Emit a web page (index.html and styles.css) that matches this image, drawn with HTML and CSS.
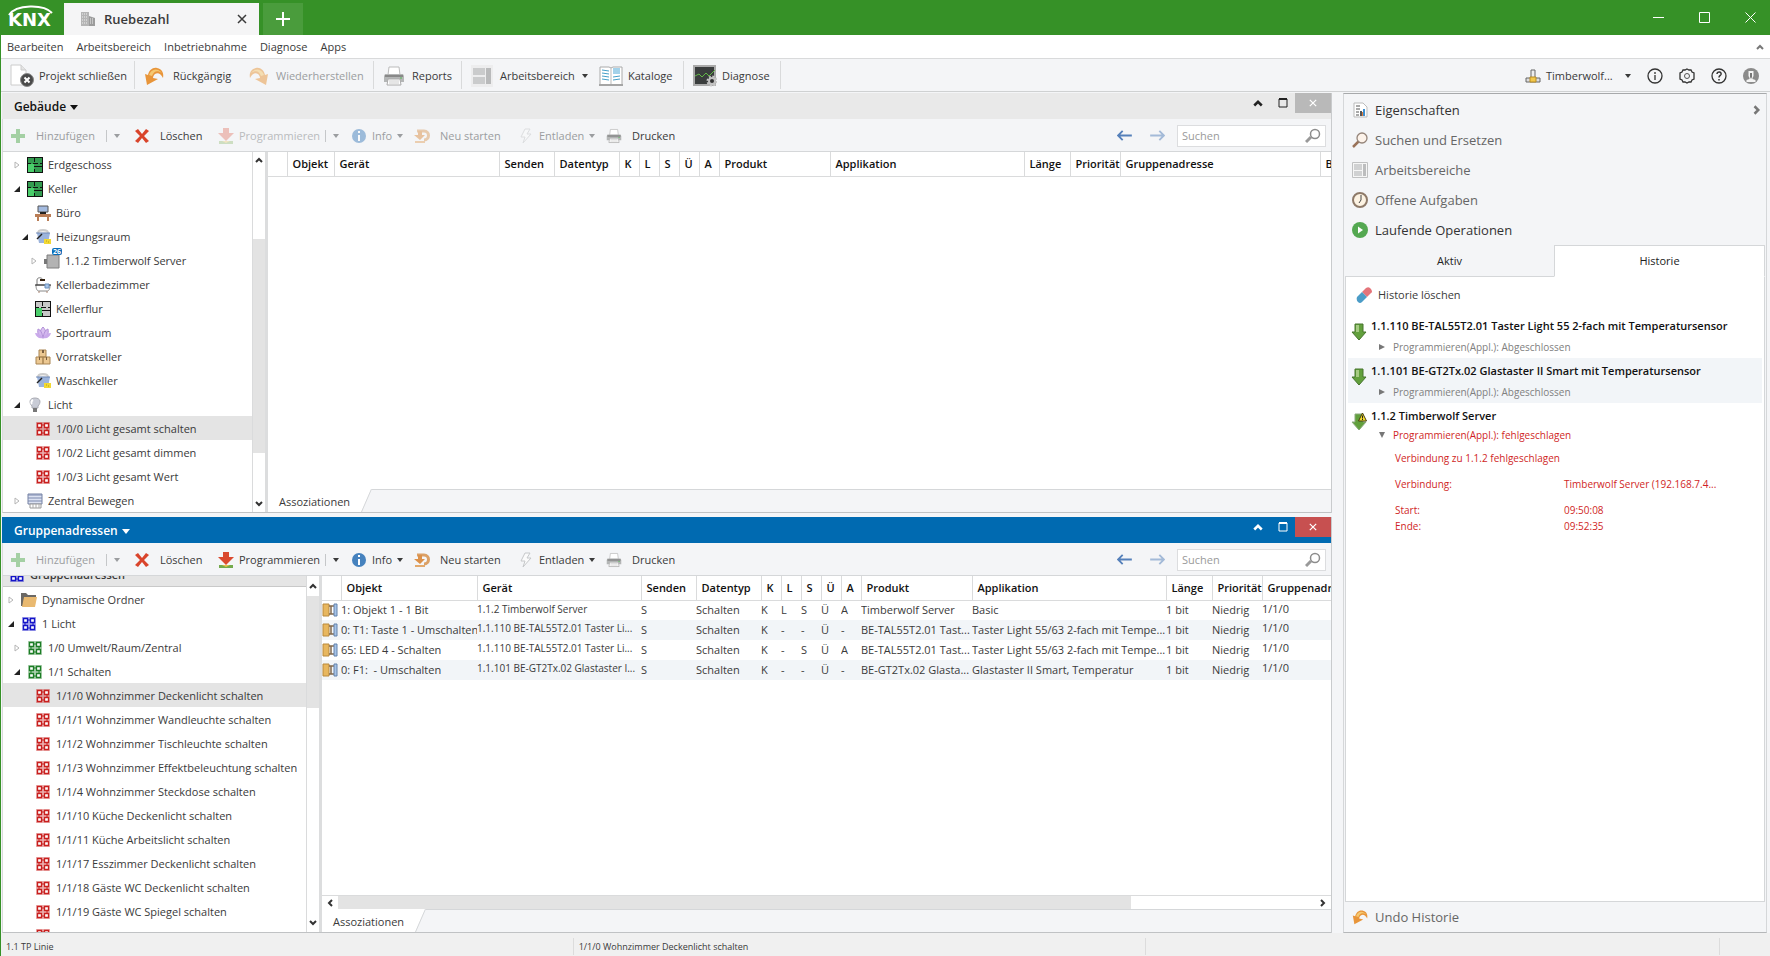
FILE: index.html
```html
<!DOCTYPE html>
<html lang="de">
<head>
  <meta charset="UTF-8">
  <title>Ruebezahl</title>
  <link rel="stylesheet" href="styles.css">
</head>
<body>

  <!-- Icons -->
  <svg class="sprite" xmlns="http://www.w3.org/2000/svg">
    <symbol id="i-building" viewBox="0 0 16 16">
      <path d="M1 1h8v14H1z" fill="#b5b5b5"/><path d="M9 5l6 2v8H9z" fill="#9c9c9c"/>
      <path d="M2 3h6M2 6h6M2 9h6M2 12h6M10 8h4M10 10h4M10 12h4" stroke="#eee" stroke-dasharray="1 1"/>
    </symbol>
    <symbol id="i-close-project" viewBox="0 0 24 24">
      <path d="M1 1h10l5 5v15H1z" fill="#fff" stroke="#ccc"/><path d="M11 1v5h5" fill="#e4e4e4" stroke="#ccc"/>
      <circle cx="17" cy="16" r="6.500" fill="#4a4a4a" stroke="#888"/><path d="M14.500 13.500l5 5M19.500 13.500l-5 5" stroke="#fff" stroke-width="2"/>
    </symbol>
    <symbol id="i-undo" viewBox="0 0 20 18">
      <path d="M1 7l3 1C5 3 9 0 13 1c5 1 7 5 6 10-2-4-5-6-8-4-1 1-2 2-2 4l5 1-11 6z" fill="#e8953a"/>
      <path d="M5 8c2-6 8-8 13-2-5-3-8-2-10 3z" fill="#f5c870"/>
    </symbol>
    <symbol id="i-printer" viewBox="0 0 22 20">
      <path d="M6 1h10l1 8H5z" fill="#fff" stroke="#bbb"/><path d="M2 8h18l1 2v6H1v-6z" fill="#b4b6b6"/>
      <path d="M2 10h18" stroke="#888" stroke-width="2"/><path d="M5 13h12l1 6H4z" fill="#fff" stroke="#aaa"/><path d="M6 15h10M6 17h10" stroke="#ccc"/><path d="M17 12h2" stroke="#5b5"/>
    </symbol>
    <symbol id="i-workspace" viewBox="0 0 22 22">
      <path d="M0 0h22v22H0z" fill="#ededee"/><path d="M2 3h12v7H2zM2 12h12v7H2z" fill="#cacbcc"/><path d="M15 3h5v16h-5z" fill="#b9babb"/>
    </symbol>
    <symbol id="i-areas" viewBox="0 0 16 16">
      <path d="M.5 .5h15v15H.5z" fill="#f6f6f6" stroke="#c0c1c2"/><path d="M2 2h8v6H2zM2 9h8v5H2z" fill="#d0d1d2"/><path d="M11 2h3v12h-3z" fill="#bcbdbe"/>
    </symbol>
    <symbol id="i-catalog" viewBox="0 0 24 22">
      <path d="M1 2h9l2 1 2-1h9v18H1z" fill="#fff" stroke="#aaa"/><path d="M0 20h24" stroke="#a5a5a5" stroke-width="2"/><path d="M12 3v16" stroke="#bbb"/>
      <path d="M3 5l7 1M3 8l7 1M3 11l7 1M3 14l7 1M14 12l7-1M14 15l7-1" stroke="#459fc8"/><path d="M14 3h7v6h-7z" fill="#a3d2ea"/>
    </symbol>
    <symbol id="i-diagnose" viewBox="0 0 24 22">
      <path d="M1 1h21v19H1z" fill="#3a3d3d" stroke="#aaa" stroke-width="2"/><path d="M2 11l4-2 3 3 4-4 3 3 6-6" fill="none" stroke="#62b748"/>
      <circle cx="19" cy="16" r="4.500" fill="none" stroke="#c8c8c8" stroke-width="2" stroke-dasharray="2 1.500"/><circle cx="19" cy="16" r="3" fill="#333" stroke="#c2c2c2" stroke-width="2"/>
    </symbol>
    <symbol id="i-net" viewBox="0 0 16 16">
      <path d="M6 2h4v8H6z" fill="#eee" stroke="#666"/><path d="M1 10h14v4H1z" fill="#ddd" stroke="#666"/><path d="M5 9h6v5H5z" fill="#f2c84b" stroke="#b78b24"/>
    </symbol>
    <symbol id="i-info-line" viewBox="0 0 16 16"><circle cx="8" cy="8" r="7" fill="none" stroke="#333" stroke-width="1.300"/><path d="M8 7v5M8 4v2" stroke="#333" stroke-width="1.300"/></symbol>
    <symbol id="i-gear" viewBox="0 0 16 16">
      <path d="M8 1l2 1 2 0 1 2 2 1 0 3 0 3-2 1-1 2-2 0-2 1-2-1-2 0-1-2-2-1 0-3 0-3 2-1 1-2 2 0z" fill="none" stroke="#333" stroke-width="1.300"/>
      <circle cx="8" cy="8" r="2.500" fill="none" stroke="#555"/>
    </symbol>
    <symbol id="i-help" viewBox="0 0 16 16"><circle cx="8" cy="8" r="7" fill="none" stroke="#333" stroke-width="1.300"/><path d="M6 6c0-3 5-2.500 4 .5C9.500 7.500 8 7.500 8 9.500M8 11v1.500" fill="none" stroke="#333" stroke-width="1.500"/></symbol>
    <symbol id="i-user" viewBox="0 0 16 16">
      <circle cx="8" cy="8" r="8" fill="#8b8b8b"/><path d="M5.500 3h5v5L9.500 10v1l3 1v2h-9v-2l3-1v-1L5.500 8z" fill="#f4f4f4"/><path d="M7 5h2v4l-1 2-1-2z" fill="#777"/>
    </symbol>
    <symbol id="i-plus" viewBox="0 0 16 16"><path d="M6 1h4v5h5v4h-5v5H6v-5H1V6h5z" fill="#56ad54"/></symbol>
    <symbol id="i-delete" viewBox="0 0 16 16"><path d="M1 3l3-2 4 5 4-5 3 2-5 5 5 5-3 2-4-5-4 5-3-2 5-5z" fill="#d9442b"/></symbol>
    <symbol id="i-download" viewBox="0 0 16 16"><path d="M5 0h6v5h5l-8 8-8-8h5z" fill="#da4a2f"/><path d="M1 13h14v3H1z" fill="#74aa4c"/><path d="M4 13h8l-4 2z" fill="#e8c14b"/></symbol>
    <symbol id="i-info" viewBox="0 0 16 16"><circle cx="8" cy="8" r="7" fill="#4682be"/><path d="M8 7v6M8 3v2" stroke="#fff" stroke-width="2"/></symbol>
    <symbol id="i-restart" viewBox="0 0 16 16"><path d="M3 3h7c6 0 6 9 0 9" fill="none" stroke="#dba066" stroke-width="3"/><path d="M4 3h4v4h3l-5 5-6-5h4z" fill="#dc914a"/><path d="M1 14h10" stroke="#e3a96c" stroke-width="2"/></symbol>
    <symbol id="i-bolt" viewBox="0 0 16 16"><path d="M7 1h5l-3 5h4l-8 9 2-6H3z" fill="#fbfbfb" stroke="#c6c8ca"/></symbol>
    <symbol id="i-arrow" viewBox="0 0 16 12"><path d="M6 1L1 6l5 5M1 6h15" fill="none" stroke="#5580ba" stroke-width="2"/></symbol>
    <symbol id="i-search" viewBox="0 0 16 16"><path d="M1 14l5-5" stroke="#999" stroke-width="3"/><circle cx="10" cy="6" r="4.500" fill="#fff" stroke="#8c8c8c" stroke-width="1.500"/></symbol>
    <symbol id="i-floor" viewBox="0 0 16 16">
      <path d="M0 0h16v16H0z" fill="#111"/><path d="M1 1h14v14H1z" fill="currentColor"/><path d="M1 7h6v8H1z" fill="#4ace6b"/>
      <path d="M7.500 1v4M1 6.500h3M6 6.500h5M13 6.500h2M7.500 12v3M7 9.500h8" stroke="#111" stroke-width="1"/>
    </symbol>
    <symbol id="i-desk" viewBox="0 0 16 16"><path d="M3 1h10v6H3z" fill="#a4bbe0" stroke="#555"/><path d="M5 8h6" stroke="#222" stroke-width="2"/><path d="M0 9h16v3h-2v4h-2v-4H4v4H2v-4H0z" fill="#b97d56"/></symbol>
    <symbol id="i-heating" viewBox="0 0 16 16">
      <path d="M3 4c0-4 10-4 10 0" fill="#eee" stroke="#ccc" stroke-width="2"/><path d="M2 4h13l-2 10H4z" fill="#9cb4dc"/><path d="M1 4h14" stroke="#6e88b6"/>
      <path d="M2 10l5-5" stroke="#222" stroke-width="1.500"/><path d="M9 10h7v5H9z" fill="#f2d934"/><path d="M11 12h1M13 13h1" stroke="#b89f18"/>
    </symbol>
    <symbol id="i-device" viewBox="0 0 16 16"><path d="M3 2h12v13H3z" fill="#b3b3b3" stroke="#7f7f7f"/><path d="M0 6h3v5H0z" fill="#777"/></symbol>
    <symbol id="i-bath" viewBox="0 0 16 16">
      <path d="M2 8V3c0-3 5-3 6 0" fill="none" stroke="#777"/><path d="M5 3h5" stroke="#321" stroke-width="2"/><path d="M1 8h14c0 4-1 6-3 6H4c-2 0-3-2-3-6z" fill="#fff" stroke="#888"/>
      <path d="M0 8h16" stroke="#222"/><path d="M10 7h4v4h-4z" fill="#a7c5e8" stroke="#6a90bd"/><path d="M4 14v2M12 14v2" stroke="#a87"/>
    </symbol>
    <symbol id="i-lotus" viewBox="0 0 16 16">
      <path d="M8 2c4 4 3 8 0 11C5 10 4 6 8 2z" fill="#d9c0f0" stroke="#b291d8"/><path d="M3 4c3 1 4 4 5 9-4-1-6-4-5-9zM13 4c-3 1-4 4-5 9 4-1 6-4 5-9z" fill="#d2b6ee" stroke="#b291d8"/>
      <path d="M0 8c4 0 6 2 8 5-4 1-7-1-8-5zM16 8c-4 0-6 2-8 5 4 1 7-1 8-5z" fill="#c9a9ea"/>
    </symbol>
    <symbol id="i-boxes" viewBox="0 0 16 16"><path d="M4 1h7v7H4zM1 8h7v7H1zM8 8h7v7H8z" fill="#ecc892" stroke="#a98552"/><path d="M7 1h2v3H7zM4 8h1v3H4zM11 8h1v3h-1z" fill="#7b6040"/></symbol>
    <symbol id="i-bulb" viewBox="0 0 16 16"><path d="M8 1c6 0 6 5 3 8v2H5V9C2 6 2 1 8 1z" fill="#c9ccd6" stroke="#a9abb3"/><path d="M6 3c-2 1-2 3-1 4" stroke="#fff" stroke-width="2" fill="none"/><path d="M6 11h4v4H6z" fill="#777"/></symbol>
    <symbol id="i-group" viewBox="0 0 16 16">
      <path d="M1 1h14v14H1z" fill="currentColor" opacity=".35"/><path d="M4 6v4M12 6v4M6 4h4M6 12h4" stroke="currentColor"/>
      <path d="M2.500 2.500h4v4h-4zM9.500 2.500h4v4h-4zM2.500 9.500h4v4h-4zM9.500 9.500h4v4h-4z" fill="#fff" stroke="currentColor" stroke-width="1.300"/>
    </symbol>
    <symbol id="i-blind" viewBox="0 0 16 16"><path d="M1 1h14v10H1z" fill="#dce2f2" stroke="#7481a3"/><path d="M1 2h14M1 5h14M1 8h14" stroke="#7a88ad"/><path d="M3 11h11v4H3z" fill="#fff" stroke="#999"/><path d="M6 11v4M9 11v4M12 11v4" stroke="#aaa"/></symbol>
    <symbol id="i-folder" viewBox="0 0 16 16"><path d="M0 1h5l2 2h8v4L4 14H0z" fill="#6b6864"/><path d="M3 5h13l-2 10H1z" fill="#e9b970"/></symbol>
    <symbol id="i-object" viewBox="0 0 16 14"><path d="M1 1h6v12H1z" fill="#e8b75f" stroke="#ba8a3e"/><path d="M7 3h5M7 11h5M9 3v8" stroke="#826a4e" stroke-width="1.500"/><path d="M12 1h3v12h-3z" fill="#a7c3e6" stroke="#6282ac"/></symbol>
    <symbol id="i-props" viewBox="0 0 16 16"><path d="M2 1h9l4 4v10H2z" fill="#fff" stroke="#bbb"/><path d="M4 4h4M4 7h4M4 10h3M4 13h3" stroke="#555"/><path d="M8 9h2v5H8z" fill="#555"/><path d="M11 7h2v7h-2z" fill="#3e8fd0"/><path d="M10 10h1v4h-1z" fill="#e07b39"/></symbol>
    <symbol id="i-lens" viewBox="0 0 16 16"><path d="M1 15l6-6" stroke="#9a735a" stroke-width="2.500"/><circle cx="10" cy="6" r="5" fill="#fdf3ea" stroke="#95857a" stroke-width="1.300"/></symbol>
    <symbol id="i-clock" viewBox="0 0 16 16"><circle cx="8" cy="8" r="7" fill="#fdf3e3" stroke="#8e7a69" stroke-width="2"/><path d="M9 3v5l-2 3" fill="none" stroke="#444"/></symbol>
    <symbol id="i-play" viewBox="0 0 16 16"><circle cx="8" cy="8" r="8" fill="#54a851"/><path d="M6 4.500l5 3.500-5 3.500z" fill="#fff"/></symbol>
    <symbol id="i-eraser" viewBox="0 0 16 16"><path d="M10 1q3-2 5 1t0 4l-4 4-5-5z" fill="#e4747a"/><path d="M6 5l5 5-5 5q-2 2-4 0t-1-5z" fill="#4b9cc7"/></symbol>
    <symbol id="i-done" viewBox="0 0 16 18"><path d="M4 1h8v8h3l-7 8-7-8h3z" fill="#62a03c" stroke="#46742d"/><path d="M5 2h3v7H5z" fill="#a5cb82"/></symbol>
    <symbol id="i-warn" viewBox="0 0 16 18"><path d="M4 1h8v8h3l-7 8-7-8h3z" fill="#62a03c" stroke="#8aa97c"/><path d="M11.500 0l4 8h-8z" fill="#f5dc2e" stroke="#443c10"/><path d="M11.500 2.500v3M11.500 6v1" stroke="#222"/></symbol>
    <symbol id="i-up" viewBox="0 0 8 6"><path d="M1 5l3-3 3 3" fill="none" stroke="currentColor" stroke-width="2"/></symbol>
    <symbol id="i-open" viewBox="0 0 6 6"><path d="M6 0v6H0z" fill="#222"/></symbol>
    <symbol id="i-shut" viewBox="0 0 6 8"><path d="M1 1l4 3-4 3z" fill="#fff" stroke="#b5b5b5"/></symbol>
    <symbol id="i-max" viewBox="0 0 10 10"><path d="M1 1h8v8H1z" fill="none" stroke="currentColor"/><path d="M1 1h8" stroke="currentColor" stroke-width="2"/></symbol>
    <symbol id="i-x" viewBox="0 0 10 10"><path d="M1 1l8 8M9 1L1 9" stroke="currentColor" stroke-width="1.500"/></symbol>
  </svg>

  <header class="titlebar">
    <div class="logo">
      <svg class="logo-arc" viewBox="0 0 46 12"><path d="M1 10C8-1 36-1 44 8" fill="none" stroke="#fff" stroke-width="2"/></svg>
      <span>KNX</span>
    </div>
    <div class="project-tab">
      <svg class="ic16"><use href="#i-building"/></svg>
      <span class="project-name">Ruebezahl</span>
      <button class="plain" aria-label="Tab schließen"><svg class="ic10"><use href="#i-x"/></svg></button>
    </div>
    <button class="new-tab" aria-label="Neuer Tab"><svg width="14" height="14"><path d="M7 0v14M0 7h14" stroke="#fff" stroke-width="2"/></svg></button>
    <div class="window-buttons">
      <button aria-label="Minimieren"><svg width="11" height="11"><path d="M0 5.500h11" stroke="#fff"/></svg></button>
      <button aria-label="Maximieren"><svg width="11" height="11"><path d="M.5 .5h10v10H.5z" fill="none" stroke="#fff"/></svg></button>
      <button aria-label="Schließen"><svg width="11" height="11"><path d="M.5 .5l10 10M10.500 .5l-10 10" stroke="#fff"/></svg></button>
    </div>
  </header>

  <nav class="menubar">
    <button>Bearbeiten</button>
    <button>Arbeitsbereich</button>
    <button>Inbetriebnahme</button>
    <button>Diagnose</button>
    <button>Apps</button>
    <button class="push chevron" aria-label="Menü einklappen"><svg class="ic8"><use href="#i-up"/></svg></button>
  </nav>

  <div class="toolbar">
    <div class="tool-group">
      <button class="w-project"><svg class="ic24"><use href="#i-close-project"/></svg>Projekt schließen</button>
    </div>
    <div class="tool-group">
      <button class="w-undo"><svg class="ic20"><use href="#i-undo"/></svg>Rückgängig</button>
      <button class="w-redo" disabled><svg class="ic20 flip"><use href="#i-undo"/></svg>Wiederherstellen</button>
    </div>
    <div class="tool-group">
      <button class="w-reports"><svg class="ic22"><use href="#i-printer"/></svg>Reports</button>
    </div>
    <div class="tool-group">
      <button class="w-area"><svg class="ic22"><use href="#i-workspace"/></svg>Arbeitsbereich<i class="caret"></i></button>
      <button class="w-catalog"><svg class="ic24"><use href="#i-catalog"/></svg>Kataloge</button>
    </div>
    <div class="tool-group">
      <button class="w-diag"><svg class="ic24"><use href="#i-diagnose"/></svg>Diagnose</button>
    </div>
    <div class="tool-right">
      <button class="w-conn"><svg class="ic16"><use href="#i-net"/></svg>Timberwolf...<i class="caret"></i></button>
      <button aria-label="Info"><svg class="ic16"><use href="#i-info-line"/></svg></button>
      <button aria-label="Einstellungen"><svg class="ic16"><use href="#i-gear"/></svg></button>
      <button aria-label="Hilfe"><svg class="ic16"><use href="#i-help"/></svg></button>
      <button aria-label="Benutzer"><svg class="ic16"><use href="#i-user"/></svg></button>
    </div>
  </div>

  <main class="workspace">
    <div class="panels">

      <!-- Gebäude -->
      <section class="panel panel-top">
        <div class="panel-head">
          <button class="panel-title">Gebäude<i class="caret"></i></button>
          <button class="head-btn push" aria-label="Einklappen"><svg class="ic10"><use href="#i-up"/></svg></button>
          <button class="head-btn" aria-label="Maximieren"><svg class="ic10"><use href="#i-max"/></svg></button>
          <button class="head-close" aria-label="Schließen"><svg class="ic8"><use href="#i-x"/></svg></button>
        </div>
        <div class="panel-tools">
          <button disabled class="t-wide"><svg class="ic16"><use href="#i-plus"/></svg>Hinzufügen</button>
          <button disabled class="split" aria-label="Mehr"><i class="caret"></i></button>
          <button class="t-wide"><svg class="ic16"><use href="#i-delete"/></svg>Löschen</button>
          <button disabled class="faint"><svg class="ic16"><use href="#i-download"/></svg>Programmieren</button>
          <button disabled class="split" aria-label="Mehr"><i class="caret"></i></button>
          <button disabled><svg class="ic16"><use href="#i-info"/></svg>Info<i class="caret"></i></button>
          <button disabled class="t-wide"><svg class="ic16"><use href="#i-restart"/></svg>Neu starten</button>
          <button disabled><svg class="ic16"><use href="#i-bolt"/></svg>Entladen<i class="caret"></i></button>
          <button class="t-wide"><svg class="ic16"><use href="#i-printer"/></svg>Drucken</button>
          <button class="arrow" aria-label="Zurück"><svg class="ic-arrow"><use href="#i-arrow"/></svg></button>
          <button class="arrow" disabled aria-label="Vor"><svg class="ic-arrow flip"><use href="#i-arrow"/></svg></button>
          <label class="search"><input type="text" placeholder="Suchen" aria-label="Suchen in Gebäude"><svg class="ic16"><use href="#i-search"/></svg></label>
        </div>
        <div class="panel-body">
          <div class="tree-wrap tree-narrow">
            <ul class="tree">
              <li class="l1"><i class="exp"><svg class="exp-shut"><use href="#i-shut"/></svg></i><svg class="ic16 floor"><use href="#i-floor"/></svg>Erdgeschoss</li>
              <li class="l1"><i class="exp"><svg class="exp-open"><use href="#i-open"/></svg></i><svg class="ic16 floor"><use href="#i-floor"/></svg>Keller</li>
              <li class="l2"><i class="exp"></i><svg class="ic16"><use href="#i-desk"/></svg>Büro</li>
              <li class="l2"><i class="exp"><svg class="exp-open"><use href="#i-open"/></svg></i><svg class="ic16"><use href="#i-heating"/></svg>Heizungsraum</li>
              <li class="l3"><i class="exp"><svg class="exp-shut"><use href="#i-shut"/></svg></i><span class="device"><svg class="ic16"><use href="#i-device"/></svg><b class="badge">26</b></span>1.1.2 Timberwolf Server</li>
              <li class="l2"><i class="exp"></i><svg class="ic16"><use href="#i-bath"/></svg>Kellerbadezimmer</li>
              <li class="l2"><i class="exp"></i><svg class="ic16 floor-grey"><use href="#i-floor"/></svg>Kellerflur</li>
              <li class="l2"><i class="exp"></i><svg class="ic16"><use href="#i-lotus"/></svg>Sportraum</li>
              <li class="l2"><i class="exp"></i><svg class="ic16"><use href="#i-boxes"/></svg>Vorratskeller</li>
              <li class="l2"><i class="exp"></i><svg class="ic16"><use href="#i-heating"/></svg>Waschkeller</li>
              <li class="l1"><i class="exp"><svg class="exp-open"><use href="#i-open"/></svg></i><svg class="ic16"><use href="#i-bulb"/></svg>Licht</li>
              <li class="l2 selected"><i class="exp"></i><svg class="ic16 ga-red"><use href="#i-group"/></svg>1/0/0 Licht gesamt schalten</li>
              <li class="l2"><i class="exp"></i><svg class="ic16 ga-red"><use href="#i-group"/></svg>1/0/2 Licht gesamt dimmen</li>
              <li class="l2"><i class="exp"></i><svg class="ic16 ga-red"><use href="#i-group"/></svg>1/0/3 Licht gesamt Wert</li>
              <li class="l1"><i class="exp"><svg class="exp-shut"><use href="#i-shut"/></svg></i><svg class="ic16"><use href="#i-blind"/></svg>Zentral Bewegen</li>
            </ul>
            <div class="vscroll vscroll-top"><svg class="ic8"><use href="#i-up"/></svg><div class="thumb"></div><svg class="ic8 down"><use href="#i-up"/></svg></div>
          </div>
          <div class="grid-wrap">
            <div class="grid-area">
              <table class="grid">
                <colgroup><col class="c19"><col class="c47"><col class="c165"><col class="c55"><col class="c65"><col class="c20"><col class="c20"><col class="c20"><col class="c20"><col class="c20"><col class="c111"><col class="c194"><col class="c46"><col class="c50"><col class="c200"><col class="c70"></colgroup>
                <thead>
                  <tr><th></th><th>Objekt</th><th>Gerät</th><th>Senden</th><th>Datentyp</th><th>K</th><th>L</th><th>S</th><th>Ü</th><th>A</th><th>Produkt</th><th>Applikation</th><th>Länge</th><th>Priorität</th><th>Gruppenadresse</th><th>Beschreibung</th></tr>
                </thead>
              </table>
            </div>
            <div class="bottom-tabs"><button>Assoziationen</button><svg class="slant" viewBox="0 0 12 23"><path d="M0 0h11L1 23H0z" fill="#fff"/><path d="M11.500 0L1.500 23" stroke="#d5d7d9"/></svg><div class="tabs-rest"></div></div>
          </div>
        </div>
      </section>

      <!-- Gruppenadressen -->
      <section class="panel panel-bottom active">
        <div class="panel-head">
          <button class="panel-title">Gruppenadressen<i class="caret"></i></button>
          <button class="head-btn push" aria-label="Einklappen"><svg class="ic10"><use href="#i-up"/></svg></button>
          <button class="head-btn" aria-label="Maximieren"><svg class="ic10"><use href="#i-max"/></svg></button>
          <button class="head-close" aria-label="Schließen"><svg class="ic8"><use href="#i-x"/></svg></button>
        </div>
        <div class="panel-tools">
          <button disabled class="t-wide"><svg class="ic16"><use href="#i-plus"/></svg>Hinzufügen</button>
          <button disabled class="split" aria-label="Mehr"><i class="caret"></i></button>
          <button class="t-wide"><svg class="ic16"><use href="#i-delete"/></svg>Löschen</button>
          <button><svg class="ic16"><use href="#i-download"/></svg>Programmieren</button>
          <button class="split" aria-label="Mehr"><i class="caret"></i></button>
          <button><svg class="ic16"><use href="#i-info"/></svg>Info<i class="caret"></i></button>
          <button class="t-wide"><svg class="ic16"><use href="#i-restart"/></svg>Neu starten</button>
          <button><svg class="ic16"><use href="#i-bolt"/></svg>Entladen<i class="caret"></i></button>
          <button class="t-wide"><svg class="ic16"><use href="#i-printer"/></svg>Drucken</button>
          <button class="arrow" aria-label="Zurück"><svg class="ic-arrow"><use href="#i-arrow"/></svg></button>
          <button class="arrow" disabled aria-label="Vor"><svg class="ic-arrow flip"><use href="#i-arrow"/></svg></button>
          <label class="search"><input type="text" placeholder="Suchen" aria-label="Suchen in Gruppenadressen"><svg class="ic16"><use href="#i-search"/></svg></label>
        </div>
        <div class="panel-body">
          <div class="tree-wrap tree-broad">
            <ul class="tree scrolled">
              <li class="l0 root"><svg class="ic16 ga-blue"><use href="#i-group"/></svg>Gruppenadressen</li>
              <li class="l0"><i class="exp"><svg class="exp-shut"><use href="#i-shut"/></svg></i><svg class="ic16"><use href="#i-folder"/></svg>Dynamische Ordner</li>
              <li class="l0"><i class="exp"><svg class="exp-open"><use href="#i-open"/></svg></i><svg class="ic16 ga-blue"><use href="#i-group"/></svg>1 Licht</li>
              <li class="l1"><i class="exp"><svg class="exp-shut"><use href="#i-shut"/></svg></i><svg class="ic16 ga-green"><use href="#i-group"/></svg>1/0 Umwelt/Raum/Zentral</li>
              <li class="l1"><i class="exp"><svg class="exp-open"><use href="#i-open"/></svg></i><svg class="ic16 ga-green"><use href="#i-group"/></svg>1/1 Schalten</li>
              <li class="l2 selected"><i class="exp"></i><svg class="ic16 ga-red"><use href="#i-group"/></svg>1/1/0 Wohnzimmer Deckenlicht schalten</li>
              <li class="l2"><i class="exp"></i><svg class="ic16 ga-red"><use href="#i-group"/></svg>1/1/1 Wohnzimmer Wandleuchte schalten</li>
              <li class="l2"><i class="exp"></i><svg class="ic16 ga-red"><use href="#i-group"/></svg>1/1/2 Wohnzimmer Tischleuchte schalten</li>
              <li class="l2"><i class="exp"></i><svg class="ic16 ga-red"><use href="#i-group"/></svg>1/1/3 Wohnzimmer Effektbeleuchtung schalten</li>
              <li class="l2"><i class="exp"></i><svg class="ic16 ga-red"><use href="#i-group"/></svg>1/1/4 Wohnzimmer Steckdose schalten</li>
              <li class="l2"><i class="exp"></i><svg class="ic16 ga-red"><use href="#i-group"/></svg>1/1/10 Küche Deckenlicht schalten</li>
              <li class="l2"><i class="exp"></i><svg class="ic16 ga-red"><use href="#i-group"/></svg>1/1/11 Küche Arbeitslicht schalten</li>
              <li class="l2"><i class="exp"></i><svg class="ic16 ga-red"><use href="#i-group"/></svg>1/1/17 Esszimmer Deckenlicht schalten</li>
              <li class="l2"><i class="exp"></i><svg class="ic16 ga-red"><use href="#i-group"/></svg>1/1/18 Gäste WC Deckenlicht schalten</li>
              <li class="l2"><i class="exp"></i><svg class="ic16 ga-red"><use href="#i-group"/></svg>1/1/19 Gäste WC Spiegel schalten</li>
              <li class="l2"><i class="exp"></i><svg class="ic16 ga-red"><use href="#i-group"/></svg>1/1/20 Treppenhaus Stufen DG LG Deckel</li>
            </ul>
            <div class="vscroll vscroll-bottom"><svg class="ic8"><use href="#i-up"/></svg><div class="thumb"></div><svg class="ic8 down"><use href="#i-up"/></svg></div>
          </div>
          <div class="grid-wrap">
            <div class="grid-area">
              <table class="grid">
                <colgroup><col class="c19"><col class="c136"><col class="c164"><col class="c55"><col class="c65"><col class="c20"><col class="c20"><col class="c20"><col class="c20"><col class="c20"><col class="c111"><col class="c194"><col class="c46"><col class="c50"><col class="c200"></colgroup>
                <thead>
                  <tr><th></th><th>Objekt</th><th>Gerät</th><th>Senden</th><th>Datentyp</th><th>K</th><th>L</th><th>S</th><th>Ü</th><th>A</th><th>Produkt</th><th>Applikation</th><th>Länge</th><th>Priorität</th><th>Gruppenadresse</th></tr>
                </thead>
                <tbody>
                  <tr><td><svg class="ic-obj"><use href="#i-object"/></svg></td><td>1: Objekt 1 - 1 Bit</td><td class="raised device-name">1.1.2 Timberwolf Server</td><td>S</td><td>Schalten</td><td>K</td><td>L</td><td>S</td><td>Ü</td><td>A</td><td>Timberwolf Server</td><td>Basic</td><td>1 bit</td><td>Niedrig</td><td class="raised">1/1/0</td></tr>
                  <tr><td><svg class="ic-obj"><use href="#i-object"/></svg></td><td>0: T1: Taste 1 - Umschalten</td><td class="raised device-name">1.1.110 BE-TAL55T2.01 Taster Li...</td><td>S</td><td>Schalten</td><td>K</td><td>-</td><td>-</td><td>Ü</td><td>-</td><td>BE-TAL55T2.01 Tast...</td><td>Taster Light 55/63 2-fach mit Tempe...</td><td>1 bit</td><td>Niedrig</td><td class="raised">1/1/0</td></tr>
                  <tr><td><svg class="ic-obj"><use href="#i-object"/></svg></td><td>65: LED 4 - Schalten</td><td class="raised device-name">1.1.110 BE-TAL55T2.01 Taster Li...</td><td>S</td><td>Schalten</td><td>K</td><td>-</td><td>S</td><td>Ü</td><td>A</td><td>BE-TAL55T2.01 Tast...</td><td>Taster Light 55/63 2-fach mit Tempe...</td><td>1 bit</td><td>Niedrig</td><td class="raised">1/1/0</td></tr>
                  <tr><td><svg class="ic-obj"><use href="#i-object"/></svg></td><td>0: F1:&nbsp; - Umschalten</td><td class="raised device-name">1.1.101 BE-GT2Tx.02 Glastaster I...</td><td>S</td><td>Schalten</td><td>K</td><td>-</td><td>-</td><td>Ü</td><td>-</td><td>BE-GT2Tx.02 Glasta...</td><td>Glastaster II Smart, Temperatur</td><td>1 bit</td><td>Niedrig</td><td class="raised">1/1/0</td></tr>
                </tbody>
              </table>
            </div>
            <div class="hscroll"><svg class="ic8 left"><use href="#i-up"/></svg><div class="thumb"></div><svg class="ic8 right"><use href="#i-up"/></svg></div>
            <div class="bottom-tabs"><button>Assoziationen</button><svg class="slant" viewBox="0 0 12 23"><path d="M0 0h11L1 23H0z" fill="#fff"/><path d="M11.500 0L1.500 23" stroke="#d5d7d9"/></svg><div class="tabs-rest"></div></div>
          </div>
        </div>
      </section>
    </div>

    <!-- Seitenleiste -->
    <aside class="sidebar">
      <button class="side-item dark"><svg class="ic16"><use href="#i-props"/></svg>Eigenschaften<svg class="ic10 right push chevron"><use href="#i-up"/></svg></button>
      <button class="side-item"><svg class="ic16"><use href="#i-lens"/></svg>Suchen und Ersetzen</button>
      <button class="side-item"><svg class="ic16"><use href="#i-areas"/></svg>Arbeitsbereiche</button>
      <button class="side-item"><svg class="ic16"><use href="#i-clock"/></svg>Offene Aufgaben</button>
      <button class="side-item dark"><svg class="ic16"><use href="#i-play"/></svg>Laufende Operationen</button>
      <div class="side-tabs">
        <button>Aktiv</button>
        <button class="current">Historie</button>
      </div>
      <div class="history">
        <button class="clear-history"><svg class="ic16"><use href="#i-eraser"/></svg>Historie löschen</button>
        <article class="entry">
          <svg class="ic-entry"><use href="#i-done"/></svg>
          <h3>1.1.110 BE-TAL55T2.01 Taster Light 55 2-fach mit Temperatursensor</h3>
          <p><i class="tri"></i>Programmieren(Appl.): Abgeschlossen</p>
        </article>
        <article class="entry alt">
          <svg class="ic-entry"><use href="#i-done"/></svg>
          <h3>1.1.101 BE-GT2Tx.02 Glastaster II Smart mit Temperatursensor</h3>
          <p><i class="tri"></i>Programmieren(Appl.): Abgeschlossen</p>
        </article>
        <article class="entry failed">
          <svg class="ic-entry"><use href="#i-warn"/></svg>
          <h3>1.1.2 Timberwolf Server</h3>
          <p><i class="tri opened"></i>Programmieren(Appl.): fehlgeschlagen</p>
          <dl class="details">
            <dt class="full">Verbindung zu 1.1.2 fehlgeschlagen</dt>
            <dt class="gap">Verbindung:</dt><dd class="gap">Timberwolf Server (192.168.7.4...</dd>
            <dt>Start:</dt><dd>09:50:08</dd>
            <dt>Ende:</dt><dd>09:52:35</dd>
          </dl>
        </article>
      </div>
      <button class="side-item"><svg class="ic16"><use href="#i-undo"/></svg>Undo Historie</button>
    </aside>
  </main>

  <footer class="statusbar">
    <span>1.1 TP Linie</span>
    <span>1/1/0 Wohnzimmer Deckenlicht schalten</span>
    <span></span>
    <span></span>
  </footer>

</body>
</html>
```
FILE: styles.css
```css
* { margin: 0; padding: 0; box-sizing: border-box; }
html, body { height: 100%; }
body {
  display: flex;
  flex-direction: column;
  overflow: hidden;
  border-left: 1px solid #369127;
  background: #f4f5f7;
  font-family: 'Open Sans', 'Noto Sans', sans-serif;
  font-size: 11px;
  line-height: 16px;
  color: #3a3a3a;
}
button {
  display: flex;
  align-items: center;
  border: none;
  background: none;
  font: inherit;
  color: inherit;
  white-space: nowrap;
  cursor: pointer;
}
button:disabled { color: #9b9da0; cursor: default; }
button:disabled svg { opacity: 0.5; }
svg { display: block; flex: none; }
.sprite { display: none; }
.ic8 { width: 8px; height: 6px; }
.ic10 { width: 10px; height: 10px; }
.ic16 { width: 16px; height: 16px; }
.ic20 { width: 20px; height: 18px; }
.ic22 { width: 22px; height: 22px; }
.ic24 { width: 24px; height: 24px; }
.ic-arrow { width: 15px; height: 11px; }
.ic-obj { width: 16px; height: 14px; }
.flip { transform: scaleX(-1); }
.down { transform: rotate(180deg); }
.left { transform: rotate(-90deg); }
.right { transform: rotate(90deg); }
.push { margin-left: auto; }
.chevron { color: #777; }
.caret {
  margin-left: 6px;
  border: 3px solid transparent;
  border-top: 4px solid currentColor;
  border-bottom: 0;
}

/* Titelleiste */
.titlebar {
  display: flex;
  flex: none;
  align-items: flex-end;
  height: 35px;
  background: #369127;
}
.logo {
  width: 63px;
  padding-left: 7px;
  align-self: flex-start;
  padding-top: 5px;
  color: #fff;
  font: bold 18px/18px 'DejaVu Sans', sans-serif;
}
.logo-arc { width: 46px; height: 12px; margin-bottom: -6px; }
.project-tab {
  display: flex;
  align-items: center;
  width: 195px;
  height: 32px;
  padding: 0 12px 0 16px;
  background: #f5f5f6;
}
.project-name { flex: 1; padding-left: 8px; font-size: 13px; font-weight: 600; }
.new-tab {
  justify-content: center;
  width: 40px;
  height: 32px;
  margin-left: 4px;
  background: #4a9c3c;
}
.window-buttons { display: flex; margin-left: auto; align-self: center; }
.window-buttons button { width: 46px; justify-content: center; }
.window-buttons button:last-child { width: 40px; margin-left: 3px; }

/* Menü */
.menubar {
  display: flex;
  flex: none;
  height: 24px;
  gap: 13px;
  padding: 0 6px;
  background: #fff;
  border-bottom: 1px solid #d9dadb;
}

/* Werkzeugleiste */
.toolbar {
  display: flex;
  flex: none;
  height: 33px;
  border-bottom: 1px solid #cfd1d2;
}
.tool-group {
  display: flex;
  margin: 2px 0;
  padding-left: 9px;
  border-right: 1px solid #d9dadb;
}
.tool-group button, .tool-right button { gap: 7px; padding-top: 1px; }
.tool-group .caret { margin-left: 0; }
.w-project { width: 124px; }
.w-undo { width: 105px; }
.w-redo { width: 124px; }
.w-reports { width: 78px; }
.w-area { width: 128px; }
.w-catalog { width: 84px; }
.w-diag { width: 87px; }
.tool-group .w-undo { gap: 9px; }
.tool-group .w-project, .tool-group .w-catalog, .tool-group .w-diag { gap: 5px; }
.tool-right { display: flex; gap: 16px; margin-left: auto; padding-right: 11px; }
.tool-right .w-conn { width: 106px; gap: 5px; }
.w-conn .caret { margin-left: auto; }

/* Arbeitsfläche */
.workspace {
  display: flex;
  flex: 1;
  gap: 11px;
  min-height: 0;
  padding: 1px 3px 0 1px;
}
.panels { display: flex; flex: 1; flex-direction: column; gap: 4px; min-width: 0; }
.panel {
  display: flex;
  flex-direction: column;
  min-height: 0;
  border-right: 1px solid #c9cbcd;
}
.panel-top { flex: 420 1 0; }
.panel-bottom { flex: 416 1 0; }
.panel-head {
  display: flex;
  flex: none;
  height: 26px;
  background: #e9e9e9;
}
.panel-title { padding: 2px 0 0 12px; font-size: 12px; font-weight: 600; color: #111; }
.panel-title .caret { margin-left: 4px; border-width: 5px 4px 0; }
.head-btn { width: 25px; height: 20px; justify-content: center; color: #222; }
.head-btn .ic10 { width: 10px; height: 10px; }
.head-close {
  width: 36px;
  height: 20px;
  justify-content: center;
  background: #b9b9b9;
  color: #fff;
}
.head-close .ic8 { height: 8px; }
.active .panel-head { background: #006ab1; }
.active .panel-title, .active .head-btn { color: #fff; }
.active .head-close { background: #c75050; }
.panel-tools {
  display: grid;
  flex: none;
  grid-template-columns: 96px 28px 84px 107px 26px 63px 104px 88px 1fr 33px 27px 149px;
  align-items: center;
  height: 33px;
  padding: 1px 5px 0 7px;
  border-left: 1px solid #dadbdc;
  border-bottom: 1px solid #d5d7d9;
}
.panel-tools button { gap: 5px; }
.panel-tools .t-wide { gap: 10px; }
.panel-tools .caret { margin-left: 0; }
.panel-tools .split { height: 12px; padding-left: 7px; border-left: 1px solid #c5c7c9; }
.panel-tools .faint { color: #b9bbbd; }
.panel-tools .faint svg { opacity: 0.3; }
.search {
  display: flex;
  align-items: center;
  height: 22px;
  padding: 0 4px;
  border: 1px solid #dcdddf;
  background: #fff;
}
.search input {
  flex: 1;
  min-width: 0;
  border: none;
  outline: none;
  font: inherit;
}
.search input::placeholder { color: #9a9a9a; }
.panel-body {
  display: flex;
  flex: 1;
  min-height: 0;
  border-left: 1px solid #dadbdc;
  border-bottom: 1px solid #c0c2c4;
}

/* Baum */
.tree-wrap { display: flex; flex: none; border-right: 3px solid #dcddde; background: #fff; }
.tree-narrow { width: 265px; }
.tree-broad { width: 319px; }
.tree { flex: 1; min-width: 0; overflow: hidden; list-style: none; }
.tree li {
  display: flex;
  align-items: center;
  gap: 5px;
  height: 24px;
  padding-top: 1px;
  white-space: nowrap;
}
.tree .l0 { padding-left: 5px; }
.tree .l1 { padding-left: 11px; }
.tree .l2 { padding-left: 19px; }
.tree .l3 { padding-left: 28px; }
.tree .selected { background: #e4e4e4; }
.tree .root {
  height: 24px;
  margin-top: -13px;
  padding-left: 6px;
  background: #e5e5e5;
  border-bottom: 1px solid #c9c9c9;
  font-weight: 600;
}
.exp { width: 8px; }
.exp-open { width: 6px; height: 6px; }
.exp-shut { width: 6px; height: 8px; }
.floor { color: #339c50; }
.floor-grey { color: #c8c8c8; }
.ga-red { color: #c8201f; }
.ga-blue { color: #1414c8; }
.ga-green { color: #1d7d26; }
.device { position: relative; }
.badge {
  position: absolute;
  top: -5px;
  right: -2px;
  padding: 0 1px;
  border-radius: 2px;
  background: #0b6cb8;
  color: #fff;
  font-size: 7px;
  line-height: 7px;
}
.vscroll {
  display: grid;
  justify-items: center;
  align-items: center;
  width: 13px;
  border-left: 1px solid #dadbdc;
  color: #333;
}
.vscroll .thumb { grid-row: 3; width: 100%; height: 100%; background: #e3e3e3; }
.vscroll .down { grid-row: 5; }
.vscroll-top { grid-template-rows: 16px 71fr 214fr 43fr 16px; }
.vscroll-bottom { grid-template-rows: 20px 0fr 112fr 205fr 18px; }

/* Tabelle */
.grid-wrap { display: flex; flex: 1; flex-direction: column; min-width: 0; background: #fff; }
.grid-area { flex: 1; min-height: 0; overflow: hidden; }
.grid { width: 0; table-layout: fixed; border-collapse: collapse; }
.grid th {
  height: 24px;
  padding: 1px 0 0 5px;
  border-right: 1px solid #dadbdc;
  border-bottom: 1px solid #dadbdc;
  color: #111;
  font-weight: 600;
  text-align: left;
  white-space: nowrap;
  overflow: hidden;
}
.grid td { height: 20px; white-space: nowrap; overflow: hidden; vertical-align: middle; }
.grid td.raised { vertical-align: top; }
.grid td.device-name { font-size: 10px; }
.grid tbody tr:nth-child(even) { background: #f2f5f8; }
.c19 { width: 19px; }
.c20 { width: 20px; }
.c46 { width: 46px; }
.c47 { width: 47px; }
.c50 { width: 50px; }
.c55 { width: 55px; }
.c65 { width: 65px; }
.c70 { width: 70px; }
.c111 { width: 111px; }
.c136 { width: 136px; }
.c164 { width: 164px; }
.c165 { width: 165px; }
.c194 { width: 194px; }
.c200 { width: 200px; }
.hscroll {
  display: grid;
  flex: none;
  grid-template-columns: 16px 795fr 184fr 16px;
  align-items: center;
  justify-items: center;
  height: 14px;
  border-top: 1px solid #dadbdc;
  color: #333;
}
.hscroll .thumb { width: 100%; height: 13px; background: #e3e3e3; }
.hscroll .right { grid-column: 4; }
.bottom-tabs { display: flex; flex: none; height: 23px; background: #f4f5f7; }
.bottom-tabs button { width: 92px; padding: 3px 0 0 11px; background: #fff; }
.slant { width: 12px; height: 23px; }
.tabs-rest { flex: 1; border-top: 1px solid #d5d7d9; }

/* Seitenleiste */
.sidebar {
  display: flex;
  flex: none;
  flex-direction: column;
  width: 424px;
  padding: 1px 1px 0;
  border-top: 1px solid #a7a9ab;
  border-left: 1px solid #d5d7d9;
  border-right: 1px solid #d5d7d9;
  border-bottom: 1px solid #b5b7b9;
}
.side-item {
  flex: none;
  gap: 7px;
  height: 30px;
  padding: 0 3px 0 7px;
  font-size: 13px;
  color: #666;
}
.side-item.dark { color: #333; }
.side-tabs { display: flex; flex: none; height: 32px; }
.side-tabs button {
  flex: 1;
  justify-content: center;
  border-bottom: 1px solid #d5d7d9;
  color: #222;
}
.side-tabs .current { background: #fff; border: 1px solid #d5d7d9; border-bottom-color: #fff; }
.history {
  flex: 1;
  min-height: 0;
  padding: 0 2px;
  overflow: hidden;
  background: #fff;
  border: 1px solid #d5d7d9;
  border-top: none;
}
.clear-history { gap: 6px; height: 36px; padding-left: 8px; }
.entry {
  display: grid;
  grid-template-columns: 20px 1fr;
  height: 45px;
  padding: 4px 0 0 3px;
}
.entry.alt { background: #f2f5f8; }
.entry.failed { height: auto; color: #d01f26; }
.ic-entry { grid-row: 1 / 3; width: 16px; height: 18px; margin-top: 6px; }
.entry h3 {
  height: 19px;
  color: #111;
  font-size: 11px;
  font-weight: 600;
  line-height: 18px;
  white-space: nowrap;
}
.entry p { display: flex; align-items: center; gap: 8px; height: 18px; padding-left: 8px; font-size: 10px; color: #808080; }
.entry.failed p { color: #d01f26; }
.tri { border: 3px solid transparent; border-left: 6px solid #777; border-right: 0; }
.tri.opened { transform: rotate(90deg); }
.details {
  display: grid;
  grid-column: 2;
  grid-template-columns: 169px 1fr;
  padding: 6px 0 0 24px;
  font-size: 10px;
}
.details .full { grid-column: 1 / 3; }
.details .gap { padding: 10px 0; }

/* Statusleiste */
.statusbar {
  display: grid;
  flex: none;
  grid-template-columns: 573fr 573fr 574fr 50fr;
  height: 23px;
  padding: 5px 0 2px;
  background: #f0f0f0;
  font-size: 9px;
}
.statusbar span { padding: 1px 0 0 5px; border-right: 1px solid #dcdcdc; }
.statusbar span:last-child { border-right: none; }
```
